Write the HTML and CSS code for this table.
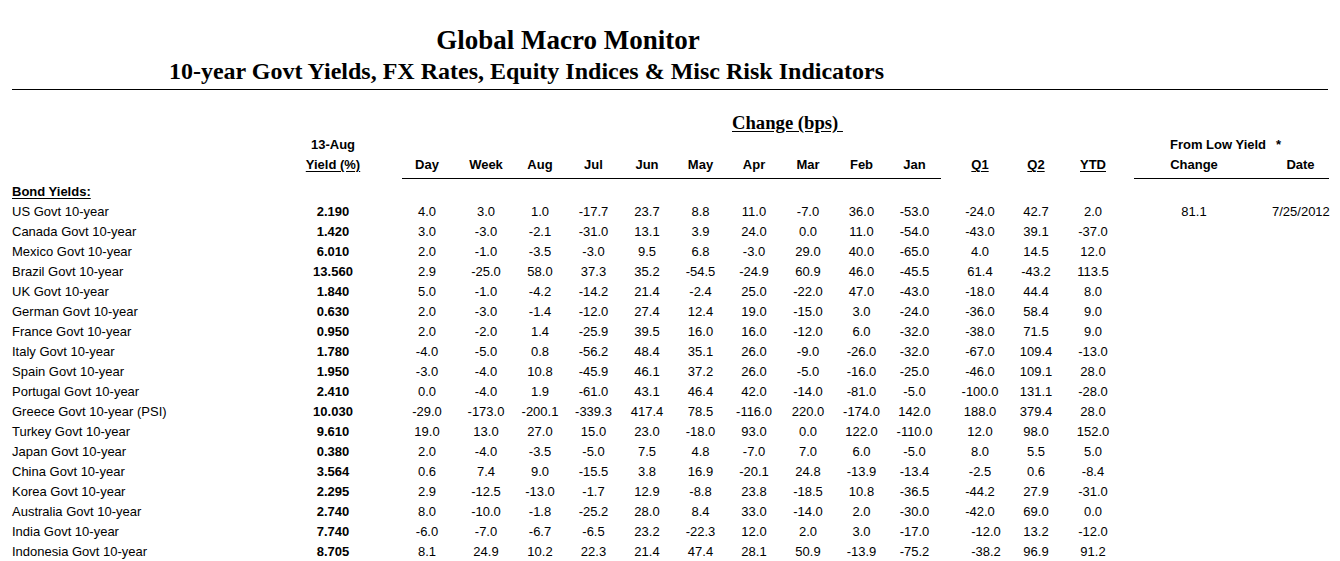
FILE: index.html
```html
<!DOCTYPE html>
<html lang="en">
<head>
<meta charset="utf-8">
<title>Global Macro Monitor</title>
<link rel="stylesheet" href="styles.css">
</head>
<body>
<div class="page">
  <header class="titles">
    <h1 class="title">Global Macro Monitor</h1>
    <h2 class="subtitle">10-year Govt Yields, FX Rates, Equity Indices &amp; Misc Risk Indicators</h2>
  </header>
  <div class="rule"></div>
  <table class="sheet">
    <colgroup>
      <col class="c-label"><col class="c-yield"><col class="c-gap1">
      <col class="c-day"><col class="c-week"><col class="c-aug"><col class="c-jul"><col class="c-jun">
      <col class="c-may"><col class="c-apr"><col class="c-mar"><col class="c-feb"><col class="c-jan">
      <col class="c-gap2"><col class="c-q1"><col class="c-q2"><col class="c-ytd"><col class="c-gap3">
      <col class="c-chg"><col class="c-date">
    </colgroup>
    <thead>
      <tr class="row-change">
        <td colspan="9"></td>
        <td colspan="4" class="change-title"><span>Change (bps) </span></td>
        <td colspan="7"></td>
      </tr>
      <tr class="row-h1">
        <td></td>
        <th>13-Aug</th>
        <td colspan="16"></td>
        <th colspan="2" class="fromlow">From Low Yield<span class="star">*</span></th>
      </tr>
      <tr class="row-h2">
        <td></td>
        <th><span class="ul">Yield (%)</span></th>
        <td></td>
        <th class="line day">Day</th>
        <th class="line week">Week</th>
        <th class="line">Aug</th>
        <th class="line">Jul</th>
        <th class="line">Jun</th>
        <th class="line">May</th>
        <th class="line">Apr</th>
        <th class="line">Mar</th>
        <th class="line">Feb</th>
        <th class="line">Jan</th>
        <td></td>
        <th><span class="ul">Q1</span></th>
        <th><span class="ul">Q2</span></th>
        <th><span class="ul">YTD</span></th>
        <td></td>
        <th class="line">Change</th>
        <th class="line date">Date</th>
      </tr>
    </thead>
    <tbody>
      <tr class="row-section"><th class="label section" colspan="20"><span class="ul">Bond Yields:</span></th></tr>
      <tr><td class="label">US Govt 10-year</td><td class="yield">2.190</td><td></td><td class="day">4.0</td><td class="week">3.0</td><td>1.0</td><td>-17.7</td><td>23.7</td><td>8.8</td><td>11.0</td><td>-7.0</td><td>36.0</td><td>-53.0</td><td></td><td>-24.0</td><td>42.7</td><td>2.0</td><td></td><td>81.1</td><td class="date">7/25/2012</td></tr>
      <tr><td class="label">Canada Govt 10-year</td><td class="yield">1.420</td><td></td><td class="day">3.0</td><td class="week">-3.0</td><td>-2.1</td><td>-31.0</td><td>13.1</td><td>3.9</td><td>24.0</td><td>0.0</td><td>11.0</td><td>-54.0</td><td></td><td>-43.0</td><td>39.1</td><td>-37.0</td><td></td><td></td><td></td></tr>
      <tr><td class="label">Mexico Govt 10-year</td><td class="yield">6.010</td><td></td><td class="day">2.0</td><td class="week">-1.0</td><td>-3.5</td><td>-3.0</td><td>9.5</td><td>6.8</td><td>-3.0</td><td>29.0</td><td>40.0</td><td>-65.0</td><td></td><td>4.0</td><td>14.5</td><td>12.0</td><td></td><td></td><td></td></tr>
      <tr><td class="label">Brazil Govt 10-year</td><td class="yield">13.560</td><td></td><td class="day">2.9</td><td class="week">-25.0</td><td>58.0</td><td>37.3</td><td>35.2</td><td>-54.5</td><td>-24.9</td><td>60.9</td><td>46.0</td><td>-45.5</td><td></td><td>61.4</td><td>-43.2</td><td>113.5</td><td></td><td></td><td></td></tr>
      <tr><td class="label">UK Govt 10-year</td><td class="yield">1.840</td><td></td><td class="day">5.0</td><td class="week">-1.0</td><td>-4.2</td><td>-14.2</td><td>21.4</td><td>-2.4</td><td>25.0</td><td>-22.0</td><td>47.0</td><td>-43.0</td><td></td><td>-18.0</td><td>44.4</td><td>8.0</td><td></td><td></td><td></td></tr>
      <tr><td class="label">German Govt 10-year</td><td class="yield">0.630</td><td></td><td class="day">2.0</td><td class="week">-3.0</td><td>-1.4</td><td>-12.0</td><td>27.4</td><td>12.4</td><td>19.0</td><td>-15.0</td><td>3.0</td><td>-24.0</td><td></td><td>-36.0</td><td>58.4</td><td>9.0</td><td></td><td></td><td></td></tr>
      <tr><td class="label">France Govt 10-year</td><td class="yield">0.950</td><td></td><td class="day">2.0</td><td class="week">-2.0</td><td>1.4</td><td>-25.9</td><td>39.5</td><td>16.0</td><td>16.0</td><td>-12.0</td><td>6.0</td><td>-32.0</td><td></td><td>-38.0</td><td>71.5</td><td>9.0</td><td></td><td></td><td></td></tr>
      <tr><td class="label">Italy Govt 10-year</td><td class="yield">1.780</td><td></td><td class="day">-4.0</td><td class="week">-5.0</td><td>0.8</td><td>-56.2</td><td>48.4</td><td>35.1</td><td>26.0</td><td>-9.0</td><td>-26.0</td><td>-32.0</td><td></td><td>-67.0</td><td>109.4</td><td>-13.0</td><td></td><td></td><td></td></tr>
      <tr><td class="label">Spain Govt 10-year</td><td class="yield">1.950</td><td></td><td class="day">-3.0</td><td class="week">-4.0</td><td>10.8</td><td>-45.9</td><td>46.1</td><td>37.2</td><td>26.0</td><td>-5.0</td><td>-16.0</td><td>-25.0</td><td></td><td>-46.0</td><td>109.1</td><td>28.0</td><td></td><td></td><td></td></tr>
      <tr><td class="label">Portugal Govt 10-year</td><td class="yield">2.410</td><td></td><td class="day">0.0</td><td class="week">-4.0</td><td>1.9</td><td>-61.0</td><td>43.1</td><td>46.4</td><td>42.0</td><td>-14.0</td><td>-81.0</td><td>-5.0</td><td></td><td>-100.0</td><td>131.1</td><td>-28.0</td><td></td><td></td><td></td></tr>
      <tr><td class="label">Greece Govt 10-year (PSI)</td><td class="yield">10.030</td><td></td><td class="day">-29.0</td><td class="week">-173.0</td><td>-200.1</td><td>-339.3</td><td>417.4</td><td>78.5</td><td>-116.0</td><td>220.0</td><td>-174.0</td><td>142.0</td><td></td><td>188.0</td><td>379.4</td><td>28.0</td><td></td><td></td><td></td></tr>
      <tr><td class="label">Turkey Govt 10-year</td><td class="yield">9.610</td><td></td><td class="day">19.0</td><td class="week">13.0</td><td>27.0</td><td>15.0</td><td>23.0</td><td>-18.0</td><td>93.0</td><td>0.0</td><td>122.0</td><td>-110.0</td><td></td><td>12.0</td><td>98.0</td><td>152.0</td><td></td><td></td><td></td></tr>
      <tr><td class="label">Japan Govt 10-year</td><td class="yield">0.380</td><td></td><td class="day">2.0</td><td class="week">-4.0</td><td>-3.5</td><td>-5.0</td><td>7.5</td><td>4.8</td><td>-7.0</td><td>7.0</td><td>6.0</td><td>-5.0</td><td></td><td>8.0</td><td>5.5</td><td>5.0</td><td></td><td></td><td></td></tr>
      <tr><td class="label">China Govt 10-year</td><td class="yield">3.564</td><td></td><td class="day">0.6</td><td class="week">7.4</td><td>9.0</td><td>-15.5</td><td>3.8</td><td>16.9</td><td>-20.1</td><td>24.8</td><td>-13.9</td><td>-13.4</td><td></td><td>-2.5</td><td>0.6</td><td>-8.4</td><td></td><td></td><td></td></tr>
      <tr><td class="label">Korea Govt 10-year</td><td class="yield">2.295</td><td></td><td class="day">2.9</td><td class="week">-12.5</td><td>-13.0</td><td>-1.7</td><td>12.9</td><td>-8.8</td><td>23.8</td><td>-18.5</td><td>10.8</td><td>-36.5</td><td></td><td>-44.2</td><td>27.9</td><td>-31.0</td><td></td><td></td><td></td></tr>
      <tr><td class="label">Australia Govt 10-year</td><td class="yield">2.740</td><td></td><td class="day">8.0</td><td class="week">-10.0</td><td>-1.8</td><td>-25.2</td><td>28.0</td><td>8.4</td><td>33.0</td><td>-14.0</td><td>2.0</td><td>-30.0</td><td></td><td>-42.0</td><td>69.0</td><td>0.0</td><td></td><td></td><td></td></tr>
      <tr><td class="label">India Govt 10-year</td><td class="yield">7.740</td><td></td><td class="day">-6.0</td><td class="week">-7.0</td><td>-6.7</td><td>-6.5</td><td>23.2</td><td>-22.3</td><td>12.0</td><td>2.0</td><td>3.0</td><td>-17.0</td><td></td><td class="shift">-12.0</td><td>13.2</td><td>-12.0</td><td></td><td></td><td></td></tr>
      <tr><td class="label">Indonesia Govt 10-year</td><td class="yield">8.705</td><td></td><td class="day">8.1</td><td class="week">24.9</td><td>10.2</td><td>22.3</td><td>21.4</td><td>47.4</td><td>28.1</td><td>50.9</td><td>-13.9</td><td>-75.2</td><td></td><td class="shift">-38.2</td><td>96.9</td><td>91.2</td><td></td><td></td><td></td></tr>
    </tbody>
  </table>
</div>
</body>
</html>
```
FILE: styles.css
```css
html, body {
  margin: 0;
  padding: 0;
  background: #ffffff;
  color: #000000;
}

.page {
  width: 1340px;
  overflow: hidden;
  font-family: "Liberation Sans", Arial, sans-serif;
  font-size: 13px;
}

.titles {
  padding-top: 24px;
  padding-left: 12px;
}

.title {
  margin: 0;
  width: 1112px;
  text-align: center;
  font-family: "Liberation Serif", "Times New Roman", serif;
  font-weight: bold;
  font-size: 27px;
  line-height: 32px;
}

.subtitle {
  margin: 0;
  width: 1029px;
  text-align: center;
  font-family: "Liberation Serif", "Times New Roman", serif;
  font-weight: bold;
  font-size: 24px;
  line-height: 30px;
}

.rule {
  margin: 3px 12px 0 12px;
  border-top: 1px solid #000;
}

.sheet {
  margin: 22px 0 0 12px;
  width: 1317px;
  table-layout: fixed;
  border-collapse: separate;
  border-spacing: 0;
}

.sheet td,
.sheet th {
  padding: 0;
  height: 20px;
  line-height: 20px;
  white-space: nowrap;
  text-align: center;
  vertical-align: baseline;
  font-weight: normal;
}

.sheet th {
  font-weight: bold;
}

.c-label { width: 278px; }
.c-yield { width: 86px; }
.c-gap1 { width: 26px; }
.c-day { width: 54px; }
.c-week { width: 57px; }
.c-aug { width: 54px; }
.c-jul { width: 53px; }
.c-jun { width: 54px; }
.c-may { width: 53px; }
.c-apr { width: 54px; }
.c-mar { width: 54px; }
.c-feb { width: 53px; }
.c-jan { width: 53px; }
.c-gap2 { width: 9px; }
.c-q1 { width: 60px; }
.c-q2 { width: 52px; }
.c-ytd { width: 62px; }
.c-gap3 { width: 10px; }
.c-chg { width: 120px; }
.c-date { width: 75px; }

.sheet .row-change td {
  height: 23px;
  line-height: 21px;
  vertical-align: top;
}

.sheet .change-title {
  text-align: left;
  padding-left: 5px;
  font-family: "Liberation Serif", "Times New Roman", serif;
  font-weight: bold;
  font-size: 18.67px;
}

.change-title span {
  white-space: pre;
  text-decoration: underline;
  text-underline-offset: 2px;
}

.sheet .fromlow {
  text-align: left;
  padding-left: 36px;
}

.star {
  margin-left: 10px;
}

.sheet .row-h2 th,
.sheet .row-h2 td {
  padding-bottom: 3px;
}

.sheet .row-h2 .line {
  border-bottom: 1px solid #000;
}

.ul {
  text-decoration: underline;
  text-underline-offset: 2px;
}

.sheet .row-section th {
  padding-top: 3px;
  text-align: left;
}

.sheet .label {
  text-align: left;
}

.sheet .yield {
  font-weight: bold;
}

.sheet .day {
  padding-right: 4px;
}

.sheet .week {
  padding-left: 3px;
}

.sheet .date {
  padding-left: 18px;
}

.sheet .shift {
  padding-left: 12px;
}
```
